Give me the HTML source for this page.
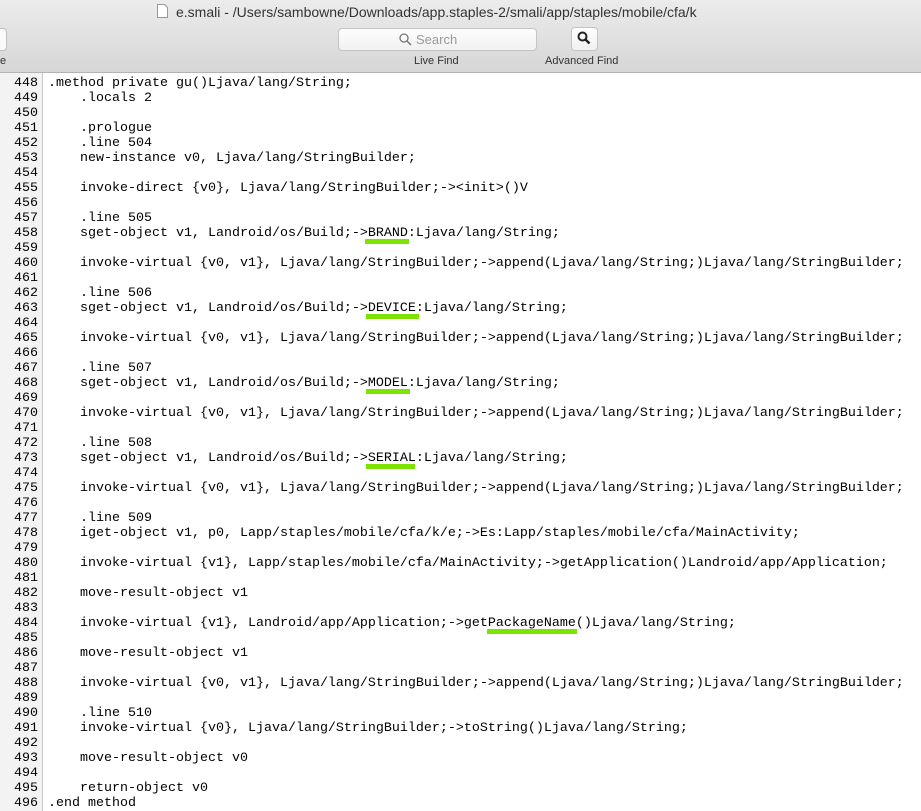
<!DOCTYPE html>
<html><head><style>
body{margin:0;width:921px;height:811px;overflow:hidden;background:#fff;font-family:"Liberation Sans",sans-serif;position:relative}
#tb{position:absolute;left:0;top:0;width:921px;height:72px;background:linear-gradient(#ececec,#d6d6d6);border-bottom:1px solid #b4b4b4}
.t{position:absolute;font-size:13px;color:#4d4d4d;white-space:nowrap}
#gut{position:absolute;left:0;top:73px;width:42px;height:738px;background:#f3f3f3;border-right:1px solid #c8c8c8}
pre{margin:0;position:absolute;top:76px;font-family:"Liberation Mono",monospace;font-size:13.33px;line-height:15px;color:#000}
#nums{left:0;width:38px;text-align:right}
#code{left:48px}
.u{position:absolute;height:5px;background:#7ce400}
</style></head><body>
<div id="tb">
<svg style="position:absolute;left:157px;top:4px" width="11" height="14"><path d="M.5 .5h7l3 3v10h-10z" fill="#fff" stroke="#999"/></svg>
<div class="t" style="left:176px;top:4px;font-size:14px;color:#333">e.smali - /Users/sambowne/Downloads/app.staples-2/smali/app/staples/mobile/cfa/k</div>
<div style="position:absolute;left:-10px;top:28px;width:15px;height:21px;background:#fafafa;border:1px solid #c0c0c0;border-radius:4px"></div>
<div class="t" style="left:0;top:55px;font-size:11px;color:#333">e</div>
<div style="position:absolute;left:338px;top:28px;width:197px;height:21px;background:linear-gradient(#fdfdfd,#f1f1f1);border:1px solid #c4c4c4;border-radius:4px"></div>
<svg style="position:absolute;left:399px;top:33px" width="13" height="13"><circle cx="5" cy="5" r="4" fill="none" stroke="#777" stroke-width="1.3"/><path d="M8 8l4 4" stroke="#777" stroke-width="1.5"/></svg>
<div class="t" style="left:416px;top:32px;color:#9a9a9a">Search</div>
<div style="position:absolute;left:571px;top:27px;width:25px;height:22px;background:linear-gradient(#fdfdfd,#f1f1f1);border:1px solid #c4c4c4;border-radius:4px"></div>
<svg style="position:absolute;left:577px;top:31px" width="14" height="14"><circle cx="5.5" cy="5.5" r="4" fill="none" stroke="#222" stroke-width="2"/><path d="M8.5 8.5l4 4" stroke="#222" stroke-width="2.4"/></svg>
<div class="t" style="left:414px;top:55px;font-size:11px;color:#333">Live Find</div>
<div class="t" style="left:545px;top:55px;font-size:11px;color:#333">Advanced Find</div>
</div>
<div id="gut"></div>
<pre id="nums">448
449
450
451
452
453
454
455
456
457
458
459
460
461
462
463
464
465
466
467
468
469
470
471
472
473
474
475
476
477
478
479
480
481
482
483
484
485
486
487
488
489
490
491
492
493
494
495
496</pre>
<div class="u" style="left:365px;top:239px;width:44px"></div>
<div class="u" style="left:366px;top:314px;width:53px"></div>
<div class="u" style="left:366px;top:389px;width:44px"></div>
<div class="u" style="left:366px;top:464px;width:49px"></div>
<div class="u" style="left:487px;top:629px;width:90px"></div>
<pre id="code">.method private gu()Ljava/lang/String;
    .locals 2

    .prologue
    .line 504
    new-instance v0, Ljava/lang/StringBuilder;

    invoke-direct {v0}, Ljava/lang/StringBuilder;-&gt;&lt;init&gt;()V

    .line 505
    sget-object v1, Landroid/os/Build;-&gt;BRAND:Ljava/lang/String;

    invoke-virtual {v0, v1}, Ljava/lang/StringBuilder;-&gt;append(Ljava/lang/String;)Ljava/lang/StringBuilder;

    .line 506
    sget-object v1, Landroid/os/Build;-&gt;DEVICE:Ljava/lang/String;

    invoke-virtual {v0, v1}, Ljava/lang/StringBuilder;-&gt;append(Ljava/lang/String;)Ljava/lang/StringBuilder;

    .line 507
    sget-object v1, Landroid/os/Build;-&gt;MODEL:Ljava/lang/String;

    invoke-virtual {v0, v1}, Ljava/lang/StringBuilder;-&gt;append(Ljava/lang/String;)Ljava/lang/StringBuilder;

    .line 508
    sget-object v1, Landroid/os/Build;-&gt;SERIAL:Ljava/lang/String;

    invoke-virtual {v0, v1}, Ljava/lang/StringBuilder;-&gt;append(Ljava/lang/String;)Ljava/lang/StringBuilder;

    .line 509
    iget-object v1, p0, Lapp/staples/mobile/cfa/k/e;-&gt;Es:Lapp/staples/mobile/cfa/MainActivity;

    invoke-virtual {v1}, Lapp/staples/mobile/cfa/MainActivity;-&gt;getApplication()Landroid/app/Application;

    move-result-object v1

    invoke-virtual {v1}, Landroid/app/Application;-&gt;getPackageName()Ljava/lang/String;

    move-result-object v1

    invoke-virtual {v0, v1}, Ljava/lang/StringBuilder;-&gt;append(Ljava/lang/String;)Ljava/lang/StringBuilder;

    .line 510
    invoke-virtual {v0}, Ljava/lang/StringBuilder;-&gt;toString()Ljava/lang/String;

    move-result-object v0

    return-object v0
.end method</pre>
</body></html>
